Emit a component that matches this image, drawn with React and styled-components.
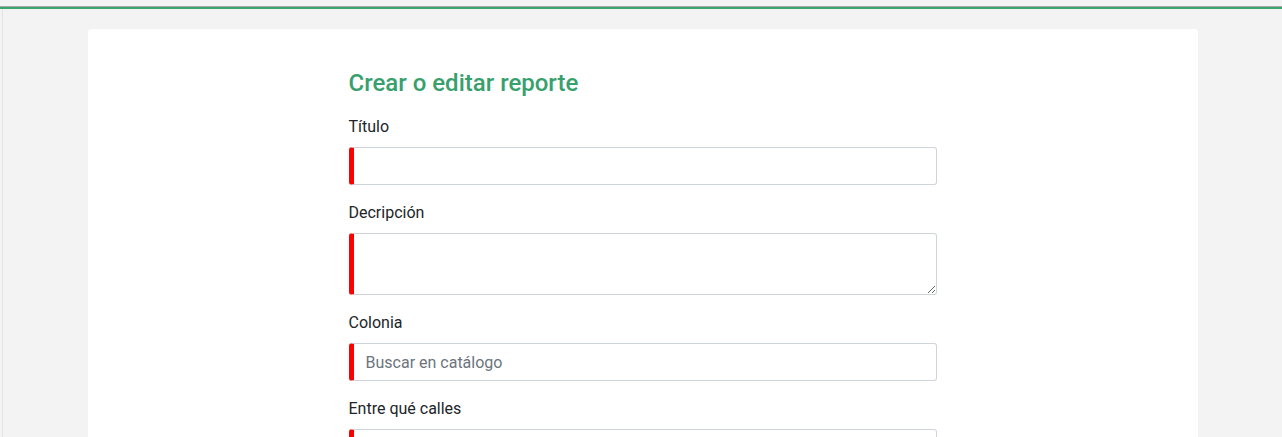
import React from "react";
import styled, { createGlobalStyle } from "styled-components";

const GlobalStyle = createGlobalStyle`
  html, body {
    margin: 0;
    padding: 0;
    background: #f3f3f3;
    font-family: Roboto, "Liberation Sans", sans-serif;
    color: #212529;
  }
  * { box-sizing: border-box; }
`;

const TopBar = styled.div`
  height: 9px;
  border-bottom: 2px solid #3aa76d;
  position: relative;

  &::after {
    content: "";
    position: absolute;
    left: 0;
    right: 0;
    bottom: 0;
    height: 1px;
    background: #a8a8a8;
  }
`;

const Shell = styled.div`
  margin-left: 2px;
  border-left: 1px solid #e4e4e4;
  min-height: 428px;
  padding-top: 20px;
`;

const Card = styled.main`
  width: 1110px;
  margin: 0 auto;
  background: #fff;
  border-radius: 4px 4px 0 0;
  padding: 40px 0 40px;
`;

const Form = styled.form`
  width: 588px;
  margin: 0 auto;
`;

const Title = styled.h2`
  margin: 0 0 18px;
  font-size: 24px;
  line-height: 28px;
  font-weight: 500;
  color: #38a06c;
`;

const Field = styled.div`
  margin-bottom: 16px;
`;

const Label = styled.label`
  display: block;
  font-size: 16px;
  line-height: 24px;
  margin-bottom: 8px;
  color: #212529;
`;

const Input = styled.input`
  display: block;
  width: 100%;
  height: 38px;
  padding: 6px 12px;
  font-family: inherit;
  font-size: 16px;
  color: #495057;
  background: #fff;
  border: 1px solid #ced4da;
  border-left: 5px solid #ff0000;
  border-radius: 3px;
  outline: none;

  &::placeholder {
    color: #6c757d;
  }
`;

const TextArea = styled(Input).attrs({ as: "textarea" })`
  height: 62px;
  resize: vertical;
`;

export default function App() {
  return (
    <>
      <GlobalStyle />
      <TopBar />
      <Shell>
        <Card>
          <Form onSubmit={(e) => e.preventDefault()}>
            <Title>Crear o editar reporte</Title>
            <Field>
              <Label>Título</Label>
              <Input type="text" />
            </Field>
            <Field>
              <Label>Decripción</Label>
              <TextArea />
            </Field>
            <Field>
              <Label>Colonia</Label>
              <Input type="text" placeholder="Buscar en catálogo" />
            </Field>
            <Field>
              <Label>Entre qué calles</Label>
              <Input type="text" />
            </Field>
          </Form>
        </Card>
      </Shell>
    </>
  );
}
